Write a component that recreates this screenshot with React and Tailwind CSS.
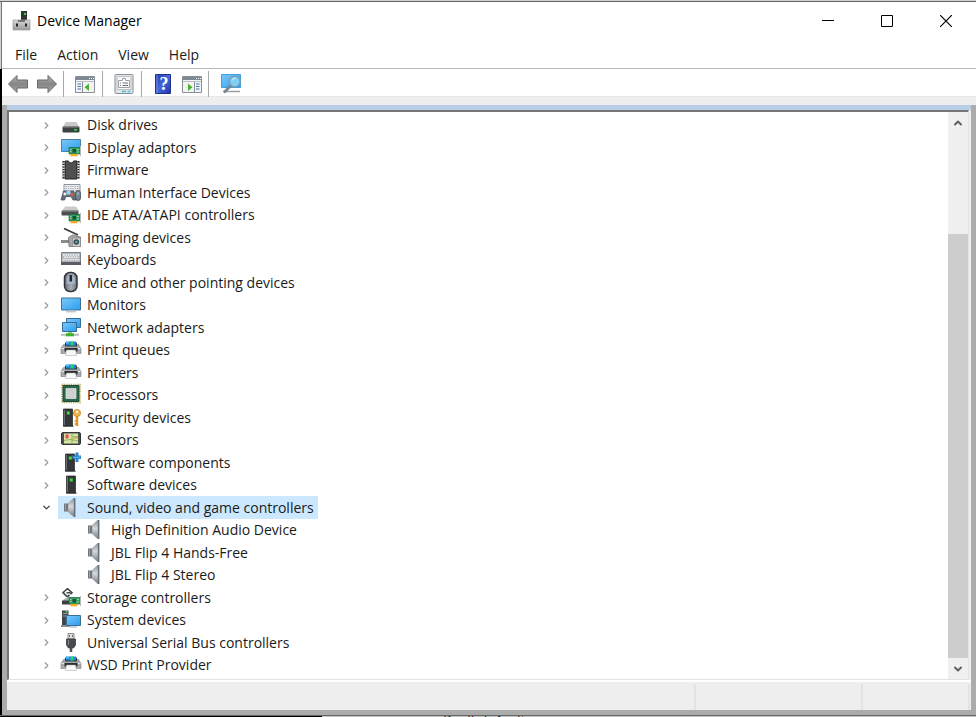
import { ChevronDown, ChevronRight, ChevronUp } from "lucide-react";

// Shared gradients, referenced by id from every icon
function Gradients() {
  return (
    <svg className="absolute h-0 w-0" aria-hidden="true">
      <defs>
        <linearGradient id="screen" x1="0" y1="0" x2="1" y2="1">
          <stop offset="0" stopColor="#7dc8f8" />
          <stop offset="1" stopColor="#2a9df0" />
        </linearGradient>
        <linearGradient id="metal" x1="0" y1="0" x2="1" y2="0">
          <stop offset="0" stopColor="#666c74" />
          <stop offset="0.5" stopColor="#a9aeb4" />
          <stop offset="1" stopColor="#70767d" />
        </linearGradient>
        <linearGradient id="cone" x1="0" y1="0" x2="0" y2="1">
          <stop offset="0" stopColor="#8d949b" />
          <stop offset="0.45" stopColor="#d4d8db" />
          <stop offset="1" stopColor="#737a81" />
        </linearGradient>
        <linearGradient id="silver" x1="0" y1="0" x2="0" y2="1">
          <stop offset="0" stopColor="#d9d9d9" />
          <stop offset="1" stopColor="#9a9a9a" />
        </linearGradient>
        <linearGradient id="arrow" x1="0" y1="0" x2="0" y2="1">
          <stop offset="0" stopColor="#b4b4b4" />
          <stop offset="0.5" stopColor="#858585" />
          <stop offset="1" stopColor="#a8a8a8" />
        </linearGradient>
        <linearGradient id="blue" x1="0" y1="0" x2="1" y2="1">
          <stop offset="0" stopColor="#2238a8" />
          <stop offset="0.5" stopColor="#4767dc" />
          <stop offset="1" stopColor="#1d35a4" />
        </linearGradient>
      </defs>
    </svg>
  );
}

function Icon({ children }) {
  return (
    <svg className="h-5 w-5 shrink-0 overflow-visible" viewBox="0 0 20 20" aria-hidden="true">
      {children}
    </svg>
  );
}

// Small green expansion card used by several categories
function Card() {
  return (
    <g>
      <path d="M8 9.500h11v6.500H8z" fill="#35a163" stroke="#1b6a3e" strokeWidth=".7" />
      <path d="M9.500 16h7v2.300h-7z" fill="#f9ab22" />
      <path d="M11.500 11h3.500v3.500h-3.500z" fill="#1c5132" />
      <path d="M9 11.500h1.500M9 13.500h1.500M16 11.500h2M16 14h2" stroke="#a9e3b6" strokeWidth=".8" />
      <path d="M19.500 8v10" stroke="#b5bcc0" strokeWidth="1" />
    </g>
  );
}

function Tower() {
  return (
    <g>
      <path d="M5.500 17h9.500l1 2h-11z" fill="#8c8c8c" />
      <path d="M5.500 1h9v17h-9z" fill="#33373a" stroke="#222" strokeWidth=".7" />
      <path d="M6.500 2v15" stroke="#6c6f71" strokeWidth="1" />
      <path d="M8.800 3.500h3v3h-3z" fill="#38e138" />
    </g>
  );
}

function DiskIcon() {
  return (
    <Icon>
      <path d="M4.500 7h11l2.500 5H2z" fill="#c9c9c9" />
      <rect x="1.500" y="11.500" width="17" height="6" rx="1" fill="#3e4144" />
      <path d="M2 12h16" stroke="#8b8b8b" />
      <path d="M13 14h3v1.500h-3z" fill="#3ddc47" />
    </Icon>
  );
}

function DisplayIcon() {
  return (
    <Icon>
      <path d="M.5 1.500h19v12H.5z" fill="url(#screen)" stroke="#4a7ea2" />
      <Card />
    </Icon>
  );
}

function FirmwareIcon() {
  return (
    <Icon>
      <path d="M4 1h3.500c.5 2.500 4.500 2.500 5 0H16v18H4z" fill="#505050" stroke="#222" />
      <path d="M2.500 1v18M17.500 1v18" stroke="#222" strokeWidth="2" />
      <path d="M2.500 2.500v16M17.500 2.500v16" stroke="#eee" strokeWidth="2" strokeDasharray="1.300 1.300" />
    </Icon>
  );
}

function HidIcon() {
  return (
    <Icon>
      <path d="M3 1.500h16v8H3z" fill="#eceef0" stroke="#8d9499" />
      <path d="M4.500 3.500h13M4.500 5.500h13M4.500 7.500h13" stroke="#a7adb2" strokeDasharray="1.500 .8" />
      <path d="M2.500 8h10l2.500 9h-3l-2-3.500H5L3.500 17H0z" fill="#66717d" stroke="#3a444e" strokeWidth=".7" />
      <path d="M5.500 7.500h4v4h-4z" fill="#9fd0f5" />
      <circle cx="3.800" cy="11" r="1.400" fill="#f4f4f4" />
      <circle cx="11" cy="11.500" r="1.400" fill="#e55a32" />
      <rect x="14.500" y="7.500" width="5" height="10" rx="2.500" fill="#75828f" stroke="#333c45" strokeWidth=".7" />
      <path d="M17 9v3" stroke="#bccbd7" />
    </Icon>
  );
}

function IdeIcon() {
  return (
    <Icon>
      <path d="M4 1.500h11l3 4.500H1z" fill="#cbcbcb" />
      <rect x=".5" y="5.500" width="17" height="5" rx="1" fill="#4c4f52" />
      <path d="M1 6h16" stroke="#959595" />
      <Card />
    </Icon>
  );
}

function ImagingIcon() {
  return (
    <Icon>
      <path d="M3 .5l14 6.500" stroke="#3c3c3c" strokeWidth="1.800" />
      <path d="M0 12h8v3H0z" fill="#8b8b8b" />
      <path d="M7.500 9.500l4-2.500L19.500 9v9.500H8z" fill="#a7a7a7" stroke="#666" strokeWidth=".7" />
      <path d="M11.500 10h8v8.500h-8z" fill="#d0ccc4" stroke="#777" strokeWidth=".5" />
      <circle cx="15.300" cy="14" r="2.800" fill="#3c4b50" />
      <circle cx="15.300" cy="14" r="1.200" fill="#54afb3" />
    </Icon>
  );
}

function KeyboardIcon() {
  return (
    <Icon>
      <path d="M.5 2.500h19v11.500H.5z" fill="#b4b8bd" stroke="#7d8289" />
      <path d="M2 5h16M3 7.300h14M2 9.600h16" stroke="#f2f3f4" strokeWidth="1.400" strokeDasharray="1.600 .8" />
      <path d="M0 12h20v3H0z" fill="#585d65" />
    </Icon>
  );
}

function MouseIcon() {
  return (
    <Icon>
      <rect x="3.500" y="-.5" width="12.500" height="19" rx="5.500" fill="url(#metal)" stroke="#30353d" strokeWidth="1.500" />
      <path d="M5.500 4.500q4-5 8.500 0v6.500H5.500z" fill="#afbfd1" opacity=".7" />
      <path d="M9.800 2v6.500" stroke="#20252b" strokeWidth="2.500" />
    </Icon>
  );
}

function MonitorIcon() {
  return (
    <Icon>
      <path d="M.5 3h19v12H.5z" fill="url(#screen)" stroke="#3d7295" />
      <path d="M8 15h4v1.500H8z" fill="#b8c3ca" />
      <path d="M5 16.800h10" stroke="#a9b5bd" />
    </Icon>
  );
}

function NetworkIcon() {
  return (
    <Icon>
      <path d="M5.500 .5h14v9h-14z" fill="url(#screen)" stroke="#336d95" />
      <path d="M1.500 4.500h14v9h-14z" fill="url(#screen)" stroke="#336d95" />
      <path d="M7 14h4v4H7z" fill="#7fd46a" />
      <path d="M0 16.800h18" stroke="#b8bdc0" strokeWidth="2" />
      <path d="M5 16.800h8" stroke="#3db32b" strokeWidth="3" />
    </Icon>
  );
}

function PrinterIcon() {
  return (
    <Icon>
      <path d="M2.500 4.500h15l2.500 4v5h-4.500v-3h-11v3H0v-5z" fill="#a9acaf" stroke="#777b7e" strokeWidth=".6" />
      <path d="M4 2.500h12v4H4z" fill="#34383b" />
      <path d="M5 1.500h10v4H5z" fill="#1685e0" />
      <path d="M9.500 1.500h3v4h-3z" fill="#2fd06a" />
      <path d="M5 1.500h3v2H5z" fill="#5cc3f8" />
      <path d="M.5 8.500h3M16.500 8.500h3" stroke="#e4e6e7" />
      <path d="M3.500 8h13v3.500h-13z" fill="#2b2e31" />
      <path d="M5.500 10h9l1 5.500h-11z" fill="#f8f8f8" stroke="#a5a5a5" strokeWidth=".5" />
    </Icon>
  );
}

function ProcessorIcon() {
  return (
    <Icon>
      <rect x="1" y="-.5" width="18" height="18" fill="none" stroke="#bfa052" strokeWidth="1.500" strokeDasharray="1.200 1" />
      <path d="M2 .5h16v16H2z" fill="#2c664a" stroke="#1c4d35" />
      <path d="M5 3.500h10v10H5z" fill="#cfd0cf" stroke="#e8e8e8" strokeWidth=".7" />
    </Icon>
  );
}

function SecurityIcon() {
  return (
    <Icon>
      <g transform="translate(-3 0)">
        <Tower />
      </g>
      <path d="M16 7v11" stroke="#d9962c" strokeWidth="2.500" />
      <path d="M16 13h-2.500M16 16h-2.500" stroke="#d9962c" strokeWidth="1.500" />
      <circle cx="16" cy="5" r="3.600" fill="#edb64e" stroke="#c98b26" strokeWidth=".8" />
      <circle cx="16" cy="3.800" r="1.100" fill="#fff" />
    </Icon>
  );
}

function SensorIcon() {
  return (
    <Icon>
      <rect x=".5" y="2.500" width="19" height="12" rx="1.500" fill="#4d5052" stroke="#33373a" />
      <path d="M3 3.500h14v10H3z" fill="#dfe0a4" />
      <path d="M3 10.500l6-1 8 1.500M11 3.500v10M11 6.500h6" stroke="#8fba68" strokeWidth="1.200" fill="none" />
      <path d="M12 8.500l5-1" stroke="#e2a746" strokeWidth="1.300" />
      <path d="M4.500 4.500h3v3L6 9 4.500 7.500z" fill="#e9485b" />
    </Icon>
  );
}

function ComponentIcon() {
  return (
    <Icon>
      <g transform="translate(-1 0)">
        <Tower />
      </g>
      <path d="M11.500 2.500h3V-.5h3v3h2.500v3.500h-2.500V9h-3V6h-3z" fill="#2e86cf" />
      <path d="M12.500 4.300h6.500" stroke="#65b2ef" />
    </Icon>
  );
}

function SoftwareIcon() {
  return (
    <Icon>
      <Tower />
    </Icon>
  );
}

function SpeakerIcon() {
  return (
    <Icon>
      <path d="M3 5.500h4v8H3z" fill="#6f757b" />
      <path d="M4.500 5.500v8" stroke="#9ba0a5" />
      <path d="M7 5.500L13 0v19L7 13.500z" fill="url(#cone)" stroke="#858b91" strokeWidth=".5" />
      <path d="M13.700 0v19" stroke="#666d74" strokeWidth="1.400" />
    </Icon>
  );
}

function StorageIcon() {
  return (
    <Icon>
      <path d="M6.500 .5l4.500 4.200-1.500 1.500M6.500 .5L2 4.700l4.500 4.200 2-2M5.500 4.700h4" fill="none" stroke="#45494c" strokeWidth="1.600" />
      <path d="M3 11l4-2h9v5H1z" fill="#b0b3b5" />
      <path d="M1 12.500h9v4H1z" fill="#3c4043" />
      <Card />
    </Icon>
  );
}

function SystemIcon() {
  return (
    <Icon>
      <path d="M1 .5h6.500v15H1z" fill="#43474a" />
      <path d="M2 3.500h4.500M2 6h4.500" stroke="#9da2a5" />
      <path d="M4.500 1h2v1.500h-2z" fill="#39d243" />
      <path d="M0 15h9v2H0z" fill="#8b9093" />
      <path d="M5.500 5.500h14v10h-14z" fill="url(#screen)" stroke="#3b6f96" />
      <path d="M9 17h7" stroke="#9ba7ae" />
    </Icon>
  );
}

function UsbIcon() {
  return (
    <Icon>
      <path d="M7 .5h6v5.500H7z" fill="#e2e2e2" stroke="#888" />
      <path d="M8.500 2v2M11.500 2v2" stroke="#666" />
      <path d="M5.500 6h9v6l-2 3h-5l-2-3z" fill="#484b4e" stroke="#2e3133" strokeWidth=".7" />
      <path d="M7.500 7v5" stroke="#85898c" />
      <path d="M10 14v5" stroke="#4b4e51" strokeWidth="2.500" />
    </Icon>
  );
}

const devices = [
  { name: "Disk drives", icon: DiskIcon },
  { name: "Display adaptors", icon: DisplayIcon },
  { name: "Firmware", icon: FirmwareIcon },
  { name: "Human Interface Devices", icon: HidIcon },
  { name: "IDE ATA/ATAPI controllers", icon: IdeIcon },
  { name: "Imaging devices", icon: ImagingIcon },
  { name: "Keyboards", icon: KeyboardIcon },
  { name: "Mice and other pointing devices", icon: MouseIcon },
  { name: "Monitors", icon: MonitorIcon },
  { name: "Network adapters", icon: NetworkIcon },
  { name: "Print queues", icon: PrinterIcon },
  { name: "Printers", icon: PrinterIcon },
  { name: "Processors", icon: ProcessorIcon },
  { name: "Security devices", icon: SecurityIcon },
  { name: "Sensors", icon: SensorIcon },
  { name: "Software components", icon: ComponentIcon },
  { name: "Software devices", icon: SoftwareIcon },
  { name: "Sound, video and game controllers", icon: SpeakerIcon, open: true },
  { name: "High Definition Audio Device", icon: SpeakerIcon, child: true },
  { name: "JBL Flip 4 Hands-Free", icon: SpeakerIcon, child: true },
  { name: "JBL Flip 4 Stereo", icon: SpeakerIcon, child: true },
  { name: "Storage controllers", icon: StorageIcon },
  { name: "System devices", icon: SystemIcon },
  { name: "Universal Serial Bus controllers", icon: UsbIcon },
  { name: "WSD Print Provider", icon: PrinterIcon },
];

function DeviceRow({ name, icon: DeviceIcon, open, child }) {
  return (
    <li
      role="treeitem"
      aria-level={child ? 2 : 1}
      aria-expanded={child ? undefined : Boolean(open)}
      aria-selected={Boolean(open)}
      className={`flex h-[22px] items-center even:h-[23px] ${child ? "pl-[73px]" : "pl-[31px]"}`}
    >
      {child ? null : (
        <button type="button" aria-label={open ? `Collapse ${name}` : `Expand ${name}`} className="mr-1.5 flex w-3 justify-center">
          {open ? (
            <ChevronDown size={11} strokeWidth={3} className="text-[#444]" />
          ) : (
            <ChevronRight size={11} strokeWidth={2.5} className="text-[#999]" />
          )}
        </button>
      )}
      <span className={`flex h-full items-center gap-1.5 pl-[3px] pr-1 whitespace-nowrap ${open ? "bg-[#cce8ff]" : ""}`}>
        <DeviceIcon />
        {name}
      </span>
    </li>
  );
}

function ToolButton({ label, children }) {
  return (
    <button type="button" aria-label={label} className="flex h-6 w-[22px] items-center justify-center">
      {children}
    </button>
  );
}

function Separator() {
  return <div className="h-[26px] w-px bg-[#a8a8a8]" />;
}

function ConsoleWindow({ flip }) {
  return (
    <Icon>
      <path d="M.5 2.500h19v16H.5z" fill="#f3f3f3" stroke="#8a9098" />
      <path d="M1 3h18v3H1z" fill="#7f8994" />
      <path d="M14 4.500h1M16 4.500h1M18 4.500h1" stroke="#fff" />
      <path d="M1 7.500h18" stroke="#b9bfc6" />
      <g transform={flip ? "translate(20 0) scale(-1 1)" : undefined}>
        <path d="M7.500 8v10" stroke="#8a9098" />
        <path d="M2.500 10h3.500M2.500 12.500h3.500M2.500 15h3.500" stroke="#3c79bb" strokeWidth="1.200" />
        <path d="M14 9.500v7.500L9.500 13.200z" fill="#4bb02c" />
      </g>
    </Icon>
  );
}

function Toolbar() {
  return (
    <div role="toolbar" aria-label="Standard" className="flex h-7 items-center border-b border-[#e8e8e8] bg-white pt-0.5 pl-[5px]">
      <div className="flex gap-[7px] pr-[5px]">
        <ToolButton label="Back">
          <Icon>
            <path d="M.5 10L9 1.500V6h10.500v8H9v4.500z" fill="url(#arrow)" stroke="#686868" />
          </Icon>
        </ToolButton>
        <ToolButton label="Forward">
          <Icon>
            <path d="M19.500 10L11 1.500V6H.5v8H11v4.500z" fill="url(#arrow)" stroke="#686868" />
          </Icon>
        </ToolButton>
      </div>
      <Separator />
      <div className="pl-2.5 pr-1.5">
        <ToolButton label="Show/Hide Console Tree">
          <ConsoleWindow />
        </ToolButton>
      </div>
      <Separator />
      <div className="pl-2.5 pr-1.5">
        <ToolButton label="Properties">
          <Icon>
            <rect x="1" y=".5" width="18" height="19" rx="1" fill="#e3e5e7" stroke="#8b9096" />
            <path d="M3 2.500h14v13H3z" fill="#f7f7f7" stroke="#bcc0c4" />
            <path d="M4.500 6.500h4v-2h3v2h4v7h-11z" fill="#fff" stroke="#9ba1a7" />
            <path d="M6 9h1M8.500 9h5.500M6 11.500h1M8.500 11.500h5.500" stroke="#6a7178" />
            <path d="M8 17.500h4M13.500 17.500h3" stroke="#48bfe3" strokeWidth="1.500" />
          </Icon>
        </ToolButton>
      </div>
      <Separator />
      <div className="flex gap-[7px] pl-2.5 pr-[5px]">
        <ToolButton label="Help">
          <Icon>
            <path d="M2.500 .5h15v19h-15z" fill="url(#blue)" stroke="#20348c" />
            <path d="M4 1v18" stroke="#7d92e6" />
            <text x="11" y="16" textAnchor="middle" fill="#fff" fontSize="18" fontWeight="bold" fontFamily="Liberation Serif, serif">?</text>
          </Icon>
        </ToolButton>
        <ToolButton label="Show/Hide Action Pane">
          <ConsoleWindow flip />
        </ToolButton>
      </div>
      <Separator />
      <div className="pl-[11px]">
        <ToolButton label="Scan for hardware changes">
          <Icon>
            <path d="M.5 .5h19v13H.5z" fill="url(#screen)" stroke="#3fa1da" />
            <path d="M2 17.500h17" stroke="#98a1a8" strokeWidth="1.500" />
            <path d="M10.500 11L3 18.500" stroke="#76828c" strokeWidth="2.500" />
            <circle cx="13.800" cy="7.500" r="5.300" fill="#7fd0f8" stroke="#7a9fb5" strokeWidth="1.500" />
            <path d="M11 6.500q1-2.500 3.500-2.500" stroke="#d8f2ff" fill="none" />
          </Icon>
        </ToolButton>
      </div>
    </div>
  );
}

function TitleBar() {
  return (
    <header className="flex h-[38px] items-center bg-white pl-[11px] text-black">
      <Icon>
        <path d="M8 0h6v9H8z" fill="#303437" />
        <path d="M11 2h2v2h-2z" fill="#37dc44" />
        <path d="M0 9h17v10H0z" fill="url(#silver)" stroke="#999" strokeWidth=".7" />
        <path d="M5 9h7v2H5z" fill="#777" />
        <path d="M3 12.500h2v3H3zM12 12.500h2v3h-2z" fill="#222" />
      </Icon>
      <h1 className="ml-1 flex-1">Device Manager</h1>
      <div className="flex gap-[47px] pr-6">
        <button type="button" aria-label="Minimise">
          <svg className="h-3 w-3" viewBox="0 0 12 12"><path d="M0 5.500h12" stroke="#000" /></svg>
        </button>
        <button type="button" aria-label="Maximise">
          <svg className="h-3 w-3" viewBox="0 0 12 12"><path d="M.5 .5h11v11H.5z" fill="none" stroke="#000" /></svg>
        </button>
        <button type="button" aria-label="Close">
          <svg className="h-3 w-3" viewBox="0 0 12 12"><path d="M0 0l12 12M12 0L0 12" stroke="#000" strokeWidth="1.200" /></svg>
        </button>
      </div>
    </header>
  );
}

function ScrollBar() {
  return (
    <div className="flex w-5 flex-col bg-[#f0f0f0]">
      <button type="button" aria-label="Scroll up" className="flex h-[22px] items-center justify-center text-[#606060]">
        <ChevronUp size={12} strokeWidth={4} />
      </button>
      <div className="flex-[100]" />
      <div className="flex-[422] bg-[#cdcdcd]" />
      <button type="button" aria-label="Scroll down" className="flex h-[21px] items-center justify-center text-[#606060]">
        <ChevronDown size={12} strokeWidth={4} />
      </button>
    </div>
  );
}

export default function App() {
  return (
    <div className="flex min-h-screen flex-col border-t border-[#d0d0d0] bg-[#c4c4c4] font-['Open_Sans',sans-serif] text-sm text-[#1a1a1a]">
      <Gradients />
      <div className="flex flex-1 flex-col border-t border-b border-[#666]">
        <div className="border-l border-[#d0d0d0]">
          <div className="border-l border-[#777]">
            <TitleBar />
            <nav aria-label="Menu" className="flex h-[29px] items-center gap-5 border-b border-[#b8b8b8] bg-white pt-px pl-[13px]">
              <button type="button">File</button>
              <button type="button">Action</button>
              <button type="button">View</button>
              <button type="button">Help</button>
            </nav>
          </div>
        </div>
        <div className="border-l-2 border-black">
          <Toolbar />
          <div className="h-2 bg-[#eee]" />
        </div>
        <div className="flex flex-1 flex-col border-l-2 border-black">
          <div className="flex flex-1 flex-col border-r-[5px] border-b-[5px] border-l-[5px] border-[#ababab] bg-[#eee]">
            <div className="h-[5px] bg-[#b9cfe7]" />
            <main className="mr-0.5 flex flex-1 border-t-2 border-r border-b border-l-2 border-t-[#777] border-r-[#e3e3e3] border-b-[#e3e3e3] border-l-[#777] bg-white">
              <ul role="tree" aria-label="Devices" className="flex-1 pt-0.5">
                {devices.map((device) => (
                  <DeviceRow key={device.name} {...device} />
                ))}
              </ul>
              <ScrollBar />
            </main>
            <footer className="flex h-[30px] border-t-2 border-white pt-0.5">
              <div className="flex-1" />
              <div className="w-[167px] border-l-2 border-[#e3e3e3]" />
              <div className="mr-px w-[109px] border-r-2 border-l-2 border-[#e3e3e3]" />
            </footer>
          </div>
        </div>
      </div>
      {/* Sliver of the window behind */}
      <div className="h-px overflow-hidden bg-linear-to-r from-black from-33% to-[#c4c4c4] to-33% pl-[443px] leading-2">
        Realtek Audio
      </div>
    </div>
  );
}
